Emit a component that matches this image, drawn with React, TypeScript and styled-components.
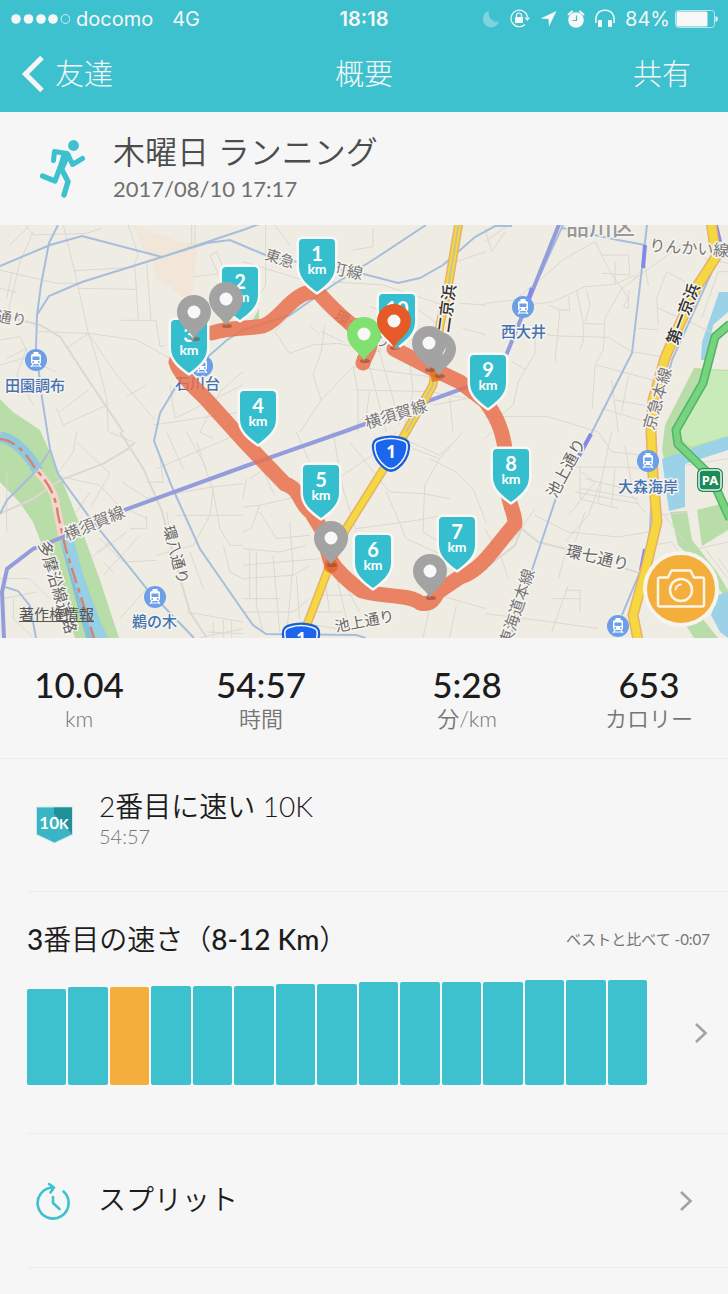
import React from "react";
import styled, { createGlobalStyle } from "styled-components";

const TEAL = "#3dc1cf";
const ORANGE = "#f4ae3b";
const LINE = "#ececec";

const GlobalStyle = createGlobalStyle`
  * { box-sizing: border-box; }
  body {
    margin: 0;
    background: #f6f6f6;
    font-family: Lato, "Noto Sans CJK JP", sans-serif;
    color: #1c1c1c;
  }
  button { font: inherit; color: inherit; background: none; border: 0; padding: 0; cursor: pointer; }
  h1, h2, p, dl, dd, dt { margin: 0; font-weight: inherit; }
`;

const Page = styled.main`
  min-height: 100vh;
  overflow: hidden;
`;

const TopBar = styled.header`
  display: flex;
  flex-direction: column;
  height: 112px;
  background: ${TEAL};
  color: #f6f6f6;
`;

const StatusBar = styled.div`
  display: grid;
  grid-template-columns: 1fr auto 1fr;
  align-items: center;
  height: 37px;
  padding: 0 10px;
  font-family: Inter, sans-serif;
  font-size: 20px;
`;

const Carrier = styled.div`
  display: flex;
  align-items: center;
  gap: 19px;
`;

const Signal = styled.div`
  display: flex;
  align-items: center;
  gap: 6px;
`;

const Clock = styled.div`
  font-weight: 600;
`;

const StatusIcons = styled.div`
  display: flex;
  align-items: center;
  justify-content: flex-end;
  gap: 10px;
`;

const Battery = styled.div`
  display: flex;
  align-items: center;
  gap: 5px;
`;

const Nav = styled.nav`
  display: grid;
  grid-template-columns: 1fr auto 1fr;
  align-items: center;
  height: 73px;
  font-size: 29px;
  font-weight: 300;
  line-height: 40px;
`;

const BackButton = styled.button`
  justify-self: start;
  display: flex;
  align-items: center;
  gap: 10px;
  margin-left: 21px;
`;

const ShareButton = styled.button`
  justify-self: end;
  margin-right: 37px;
`;

const NavTitle = styled.h1`
  font-size: 29px;
`;

const Activity = styled.section`
  display: flex;
  align-items: center;
  gap: 27px;
  height: 113px;
  padding: 0 39px;
`;

const ActivityTitle = styled.h2`
  font-size: 32px;
  line-height: 40px;
  font-weight: 350;
  color: #4c4c4c;
`;

const ActivityDate = styled.p`
  font-size: 22px;
  line-height: 34px;
  color: #707070;
`;

const MapFrame = styled.section`
  position: relative;
`;

const MapSvg = styled.svg`
  display: block;
  width: 100%;
  height: auto;
  font-family: "Noto Sans CJK JP", sans-serif;
`;

const Copyright = styled.a`
  position: absolute;
  left: 19px;
  bottom: 13px;
  font-size: 15px;
  line-height: 22px;
  color: #555;
`;

const CameraButton = styled.button`
  position: absolute;
  right: 9px;
  bottom: 11px;
  display: grid;
  place-items: center;
  width: 76px;
  height: 76px;
  border: 4px solid #f6f4ef;
  border-radius: 50%;
  background: ${ORANGE};
`;

const Stats = styled.dl`
  display: grid;
  grid-template-columns: 158fr 206fr 206fr 158fr;
  height: 121px;
  padding-top: 24px;
  border-bottom: 1px solid ${LINE};
  text-align: center;
`;

const Stat = styled.div`
  display: flex;
  flex-direction: column-reverse;
  justify-content: flex-end;
`;

const StatValue = styled.dd`
  font-size: 35px;
  line-height: 44px;
  font-weight: 500;
`;

const StatLabel = styled.dt`
  font-size: 22px;
  line-height: 26px;
  font-weight: 350;
  color: #757575;
`;

const Row = styled.section<{ $tall?: boolean }>`
  display: flex;
  align-items: center;
  gap: 25px;
  height: ${(p) => (p.$tall ? 134 : 133)}px;
  margin-left: 27px;
  padding-left: 8px;
  border-bottom: 1px solid ${LINE};
`;

const RecordText = styled.div`
  padding-bottom: 12px;
`;

const RecordTitle = styled.h2`
  font-size: 28px;
  line-height: 34px;
  font-weight: 350;
`;

const RecordTime = styled.p`
  font-size: 20px;
  line-height: 26px;
  font-weight: 350;
  color: #757575;
`;

const Ranking = styled.section`
  height: 242px;
  margin-left: 27px;
  border-bottom: 1px solid ${LINE};
`;

const RankingHead = styled.div`
  display: flex;
  align-items: center;
  justify-content: space-between;
  padding: 27px 18px 0 0;
`;

const RankingTitle = styled.h2`
  font-size: 28px;
  line-height: 40px;
  font-weight: 500;
`;

const Kanji = styled.span`
  font-weight: 350;
`;

const Compare = styled.p`
  font-size: 15px;
  line-height: 20px;
  color: #757575;
`;

const ChartRow = styled.div`
  display: flex;
  align-items: center;
  justify-content: space-between;
  padding: 21px 20px 0 0;
`;

const Bars = styled.div`
  display: flex;
  align-items: flex-end;
  gap: 2px;
  flex: 1;
  height: 105px;
  margin-right: 47px;
`;

const Bar = styled.div<{ $current: boolean }>`
  flex: 1;
  border-radius: 2px;
  background: ${(p) => (p.$current ? ORANGE : TEAL)};
`;

const IconButton = styled.button`
  display: flex;
`;

const SplitButton = styled.button`
  display: flex;
  align-items: center;
  gap: 27px;
  width: 100%;
  height: 100%;
  padding-right: 35px;
  font-size: 28px;
  font-weight: 350;
  line-height: 40px;
  text-align: left;
`;

const SplitLabel = styled.span`
  flex: 1;
  padding-bottom: 4px;
`;

/* Minor streets, drawn per tile at three times the map scale. */
const streetTiles = [
  {
    x: 0, y: 225,
    thin: "M75 0L100 30L260 25L305 10M100 20L60 110L20 280M0 135L170 175L245 175M190 0L230 165L265 325L290 400L320 520L325 621M222 137L405 127L415 283M232 190L408 193M363 286H468L480 365L500 360M385 0L415 90L400 125M440 115L453 283M115 320L265 325L410 345L510 400M265 325L200 370M265 325L350 450L465 585M580 155L655 147L630 90L650 80L670 130M0 190L50 202M35 145L20 220M0 345L60 335L110 440M0 420L70 400L170 440M20 400L80 370L50 450L100 540M180 560L265 495M170 550L190 600L320 540M510 480L525 580L729 480M380 515L440 480M600 621L660 500L729 440M575 0V60M585 0V60M30 60L90 0M460 600L729 560",
    wide: "M0 270L120 300L180 335L265 465L370 621",
  },
  {
    x: 243, y: 225,
    thin: "M68 0V180L30 240M95 0L140 60M0 110L180 165L420 180L600 240M330 75L390 65V10M140 385L95 320L160 250M140 385L210 360L285 355L410 380L420 350M210 450L235 380L245 300M210 450L235 525L170 621M235 525L330 425L345 500V621M330 425L560 455M340 495L560 500L670 520M640 110L729 80M650 235L729 240M380 245L430 260L520 250L590 300M660 310L729 330M235 320L300 350M280 240L360 350L430 621M500 400L510 500L480 621M400 350L450 520L470 600M200 300L230 330M570 540L729 510M620 520L630 621M380 500L370 570L320 621",
    wide: "",
  },
  {
    x: 485, y: 225,
    thin: "M0 50L70 0M0 10L20 80L60 20M0 235L90 225L170 160L240 100L330 50M130 240L205 230L300 185L390 178L450 150M190 240L225 255L210 410M275 195L295 295V350L285 375M250 215L255 255L225 255M295 295L355 298M305 195L315 240L300 290M330 50L375 140L410 190L590 60M350 90H430L435 150L350 145M390 110V180M410 190L430 220L415 245L430 250L432 195M410 190L360 280L355 375L330 420L322 550M150 325L220 333L370 337L440 380L560 400M150 340V385L100 470L85 540L50 570M80 410L120 433M0 575H190L340 621M335 420L540 475M380 465L400 621M430 455L410 560M390 525L500 545M520 250L700 330M545 140L515 220L520 300M545 140L600 170M660 100L729 115M650 280L700 140H729M460 310L520 315M350 550L480 590M440 170L480 120L490 180",
    wide: "",
  },
  {
    x: 0, y: 432,
    thin: "M230 30L330 125L275 220M165 130L300 160L365 230M500 0L550 110M470 110L729 0M440 200L635 165L729 155M640 170L630 250L580 340L470 370M365 150L460 210M380 230L440 260M390 290H440V250M530 250H729M590 30L640 180L660 290L690 340H729M310 430L420 310M270 380L380 300M500 240L510 300M560 540L729 570M600 617L729 590M570 360L610 470M300 320L370 390L470 385M20 120V300M0 440L90 440L150 500M670 340L690 420L729 440M360 560L440 470M310 390L340 420M290 360L330 330M560 0L620 110M600 0L640 20M230 240L270 180M440 150H490L480 80M100 617L40 560V500M10 500L110 480M640 570V617M670 565V617M695 565V617M620 600L729 605M230 0L220 60L170 130M330 0L400 30",
    wide: "M0 245L100 200L180 145L310 95L385 50L405 30M360 0L430 110L485 235L520 370L570 540L620 617",
  },
  {
    x: 243, y: 432,
    thin: "M0 225L50 220L180 190L300 130L430 40L460 0M20 140L60 115L95 190M50 220L25 290L0 300M160 0L200 90M270 0L300 170L340 300M320 30L440 180L540 185L620 200M430 180L490 320L600 370M560 80L640 120L690 170L729 270M340 290L520 265L600 250M510 50L590 80L545 160L540 300L590 330M590 80L660 0M0 350L110 360L190 340M20 355V500M40 360V520L60 600M0 400L230 380M0 440L150 430L200 400M0 540H150L200 500M90 370L110 600M140 270L150 400L130 617M240 400L260 540M280 430L310 560M200 540H300M590 490L729 530M640 520L620 617M560 530L540 617M10 140L0 200M50 240L100 320L200 310M480 20L590 70L620 40M0 500H110M160 430L170 560M290 430L350 540M240 490H350M220 580L280 590",
    wide: "",
  },
  {
    x: 485, y: 432,
    thin: "M380 0L350 140L310 250L240 330M270 105H400L480 110M285 105V200L400 230M150 250L250 300L400 315L490 300M330 150L250 250M0 290L50 380L70 440M240 475H285V540M250 460L200 600M0 545L200 570L340 590M200 500H285M440 190L480 240M530 240L600 330M500 340L560 330L590 370M700 380L729 420M600 100L729 80M420 40L440 160M300 140L460 180M290 170L460 200M270 180L460 215M350 140L340 210M390 110L380 220M290 120L330 150M640 350L729 330M660 350L729 440M0 20L20 0M340 0L380 60L480 70M300 240L270 330M150 230L80 330M250 330L220 440M530 250L610 240",
    wide: "M110 290L160 330L240 350M0 410L90 340L110 290M420 410L470 425",
  },
];

const railLines =
  "M0 266L50 245L82 236L162 257L243 230L265 222M58 225L49 243L41 285L37 315L36 348L42 398L50 449L58 474L87 514L147 589L194 638M37 315L49 296L82 282L162 257L207 243L230 240L270 257L360 273L398 283L420 278L443 265L475 237L495 226H512M426 225L376 258L333 285L290 315L243 330L227 340L202 362L177 385L160 413L154 441L172 487L200 549L243 611L253 625L266 634L356 635L366 638M50 450L37 470L7 500L0 514M5 587L18 591L30 606L36 638M563 225L540 275M562 228L618 240L645 245M647 225L642 268L632 353L592 432L557 495L533 567L510 638M718 258L672 360L655 425L650 530L645 560L622 615";

const purpleLine =
  "M4 639L2 592L7 569L33 549L63 537L127 509L243 467L343 432L470 386L490 378L507 353L532 292L560 222";

const daiNiKeihin =
  "M459 222L448 288L440 325L433 385L406 432L383 470L346 529L331 562L308 622L300 640";

const daiIchiKeihin =
  "M711 222L715 248L716 257L698 285L678 328L665 358L653 400L651 432L653 475L657 522L645 572L633 615L638 640";

const expressway = "M730 324L715 337L703 383L676 430L678 444L710 475L730 519";

const route =
  "M363 363C366 352 375 346 366 337C352 324 340 318 317 291C308 292 303 294 300 296C285 305 277 321 263 326C248 329 230 327 212 333M176 362C180 375 195 388 205 398L243 440L285 484C300 488 300 505 311 512L322 530L330 560C340 575 350 583 362 591C380 597 410 594 420 603C432 606 435 597 438 592L460 577C483 570 495 546 515 524C515 510 507 505 507 480C507 440 500 420 485 401L460 382L433 369L394 349";

const kmBadges: [string, number, number][] = [
  ["2", 240, 267],
  ["1", 317, 239],
  ["3", 189, 320],
  ["4", 258, 391],
  ["5", 321, 465],
  ["6", 373, 535],
  ["7", 457, 517],
  ["8", 511, 449],
  ["9", 488, 355],
  ["10", 397, 294],
];

const GREY = "#a3a3a3";

const pins: [number, number, string][] = [
  [194, 312, GREY],
  [226, 299, GREY],
  [331, 538, GREY],
  [430, 571, GREY],
  [439, 349, GREY],
  [429, 343, GREY],
  [364, 334, "#80e070"],
  [394, 321, "#e65a28"],
];

type LabelSpec = { t: string; x: number; y: number; r?: number; s?: number; c?: string; w?: number };

const STATION_BLUE = "#4672b2";

const labels: LabelSpec[] = [
  { t: "品川区", x: 566, y: 235, s: 23, c: "#999", w: 500 },
  { t: "りんかい線", x: 649, y: 251, r: 4, s: 16 },
  { t: "東急", x: 264, y: 259, r: 18, s: 15 },
  { t: "町線", x: 330, y: 273, r: 12, s: 16 },
  { t: "環七", x: 333, y: 319, r: 28, s: 15 },
  { t: "り", x: 374, y: 344, r: 15, s: 15 },
  { t: "通り", x: -4, y: 321, r: 10, s: 15 },
  { t: "二京浜", x: 449, y: 333, r: -82, s: 16, c: "#333", w: 500 },
  { t: "第一京浜", x: 677, y: 346, r: -69, s: 16, c: "#333", w: 500 },
  { t: "京急本線", x: 654, y: 431, r: -74, s: 16 },
  { t: "池上通り", x: 556, y: 499, r: -62, s: 16, c: "#666" },
  { t: "東海道本線", x: 510, y: 647, r: -72, s: 16 },
  { t: "環七通り", x: 565, y: 556, r: 13, s: 16, c: "#666" },
  { t: "横須賀線", x: 367, y: 429, r: -17, s: 16 },
  { t: "横須賀線", x: 67, y: 541, r: -23, s: 16 },
  { t: "環八通り", x: 163, y: 527, r: 75, s: 15, c: "#666" },
  { t: "多摩沿線道路", x: 38, y: 543, r: 73, s: 16, c: "#666" },
  { t: "池上通り", x: 336, y: 632, r: -11, s: 15, c: "#666" },
  { t: "田園調布", x: 5, y: 391, c: STATION_BLUE, w: 500 },
  { t: "石川台", x: 175, y: 389, c: STATION_BLUE, w: 500 },
  { t: "西大井", x: 501, y: 337, c: STATION_BLUE, w: 500 },
  { t: "鵜の木", x: 132, y: 627, c: STATION_BLUE, w: 500 },
  { t: "大森海岸", x: 618, y: 492, c: STATION_BLUE, w: 500 },
];

const stations: [number, number][] = [
  [36, 360],
  [202, 366],
  [523, 307],
  [155, 597],
  [648, 461],
  [618, 626],
];

const MapLabel = ({ t, x, y, r = 0, s = 15, c = "#777", w = 400 }: LabelSpec) => (
  <text
    transform={`translate(${x} ${y}) rotate(${r})`}
    fontSize={s}
    fontWeight={w}
    fill={c}
    stroke="#f6f4ef"
    strokeWidth="3"
    strokeLinejoin="round"
    paintOrder="stroke"
  >
    {t}
  </text>
);

const KmBadge = ({ n, x, y }: { n: string; x: number; y: number }) => (
  <g transform={`translate(${x} ${y})`}>
    <path
      d="M-14 0H14Q18 0 18 4V28C18 40 8 47 0 53C-8 47 -18 40 -18 28V4Q-18 0 -14 0Z"
      fill="#35bfce"
      stroke="#f8f8f6"
      strokeWidth="5"
      strokeLinejoin="round"
      paintOrder="stroke"
    />
    <g fill="#fff" fontFamily="Lato, sans-serif" fontWeight="700" textAnchor="middle">
      <text y="22" fontSize="20">{n}</text>
      <text y="35" fontSize="14">km</text>
    </g>
  </g>
);

const Pin = ({ x, y, fill }: { x: number; y: number; fill: string }) => (
  <g transform={`translate(${x} ${y})`}>
    <ellipse cx="1" cy="27" rx="5" ry="2" fill="#8d4a38" opacity="0.6" />
    <path d="M0 27C-3 19 -17 13 -17 0A17 17 0 0 1 17 0C17 13 3 19 0 27Z" fill={fill} />
    <circle r="6.5" fill="#f8f8f8" />
  </g>
);

const Station = ({ x, y }: { x: number; y: number }) => (
  <g transform={`translate(${x} ${y})`}>
    <circle r="11" fill="#6c9fe8" />
    <rect x="-5" y="-6" width="10" height="10" rx="2" fill="#fff" />
    <rect x="-3.5" y="-3.5" width="7" height="3.5" fill="#6c9fe8" />
    <path d="M-2.5 -6V-8H2.500V-6" fill="#fff" />
    <circle cx="-2.8" cy="2" r="0.9" fill="#6c9fe8" />
    <circle cx="2.8" cy="2" r="0.9" fill="#6c9fe8" />
    <path d="M-3 4L-5 7M3 4L5 7M-4 6H4" stroke="#fff" strokeWidth="1.2" />
  </g>
);

const HighwayShield = ({ x, y }: { x: number; y: number }) => (
  <g transform={`translate(${x} ${y})`}>
    <path
      d="M-11 -16Q0 -19 11 -16C16 -15 19 -12 18 -5C17 3 13 9 7 14Q0 20 -7 14C-13 9 -17 3 -18 -5C-19 -12 -16 -15 -11 -16Z"
      fill="#1c66ee"
      stroke="#1b5fd6"
      strokeWidth="2"
    />
    <path
      d="M-10 -14Q0 -17 10 -14C15 -13 17 -11 16 -5C15 2 11 8 6 12Q0 17 -6 12C-11 8 -15 2 -16 -5C-17 -11 -15 -13 -10 -14Z"
      fill="none"
      stroke="#f4f7ff"
      strokeWidth="1.6"
    />
    <text y="4" textAnchor="middle" fill="#fff" fontSize="17" fontWeight="700" fontFamily="'Noto Sans', sans-serif">1</text>
  </g>
);

const RouteMap = () => (
  <MapSvg viewBox="0 225 728 413" role="img" aria-label="ランニングコースの地図">
    <rect x="0" y="225" width="728" height="413" fill="#efece4" />
    <path d="M133 225L160 235L183 243L198 242L193 285L191 300L180 296L172 287L157 279L152 258L143 249Z" fill="#f1e6d8" />
    <path d="M0 399L13 412L40 430L60 475L80 525L100 580L119 638H75L63 598L33 522L20 503L0 482Z" fill="#b9dda8" />
    <path d="M694 368L728 370V437L664 459L662 450L665 425Z" fill="#b9dda8" />
    <path d="M706 370L728 371V436L690 447L679 436V430L703 385Z" fill="#c9ebba" />
    <path d="M728 292H719L702 342L701 360L707 360L713 325L728 312Z" fill="#9cd2e8" />
    <path d="M728 436L662 459L669 511L685 507V464L728 450Z" fill="#9cd2e8" />
    <path d="M670 512L687 511L692 540L717 572L728 590V600L696 562L678 545Z" fill="#b9dda8" />
    <path d="M697 510L728 502V530L702 546Z" fill="#b9dda8" />
    <path d="M684 622L702 618L718 638H694Z" fill="#b9dda8" />
    <path d="M728 592L718 595L711 615L720 632L728 638Z" fill="#9cd2e8" />
    <path d="M252 321L259 309V320Z" fill="#b9dda8" />

    {streetTiles.map((tile) => (
      <g
        key={`${tile.x}-${tile.y}`}
        transform={`translate(${tile.x} ${tile.y}) scale(0.3333)`}
        fill="none"
        stroke="#dad8d1"
      >
        <path d={tile.thin} strokeWidth="3" />
        <path d={tile.wide} strokeWidth="6" />
      </g>
    ))}

    <path d="M0 437Q20 440 38 471" fill="none" stroke="#8ec9dd" strokeWidth="11" />
    <path d="M36 470Q55 490 56 505L63 540" fill="none" stroke="#f3d6cc" strokeWidth="8" />
    <path d="M60 540H74Q84 585 108 638H86Z" fill="#97cfe4" />
    <path d="M60 540L86 638H93Z" fill="#86bfd6" />
    <path
      d="M0 439Q20 441 36 470Q55 488 58 515L66 550L94 638"
      fill="none"
      stroke="#d98070"
      strokeWidth="2.4"
      strokeDasharray="16 5 5 5"
    />

    <path d={railLines} fill="none" stroke="#a6bedb" strokeWidth="2" />
    <path d={purpleLine} fill="none" stroke="#949cdb" strokeWidth="4" />
    <path d="M645 245L643 268M591 434L579 456M645 549L641 570M716 225L720 242M532 288L528 300" stroke="#8388ea" strokeWidth="4" />

    <g fill="none" strokeLinejoin="round">
      <g stroke="#e8b06a">
        <path d={daiNiKeihin} strokeWidth="9" />
        <path d={daiIchiKeihin} strokeWidth="11" />
      </g>
      <g stroke="#f5d83f">
        <path d={daiNiKeihin} strokeWidth="6" />
        <path d={daiIchiKeihin} strokeWidth="8" />
      </g>
      <path d="M459 222L448 288L440 325L433 385L406 432" stroke="#c9c39a" strokeWidth="2" />
      <path d={expressway} stroke="#4eb563" strokeWidth="9" />
      <path d={expressway} stroke="#77d380" strokeWidth="6" />
    </g>

    {stations.map(([x, y]) => (
      <Station key={`${x}-${y}`} x={x} y={y} />
    ))}
    {labels.map((l) => (
      <MapLabel key={`${l.t}-${l.x}`} {...l} />
    ))}

    <HighwayShield x={391} y={454} />
    <HighwayShield x={301} y={641} />

    <g>
      <rect x="697" y="468" width="26" height="24" rx="6" fill="#1e8a56" />
      <rect x="699" y="470" width="22" height="20" rx="4" fill="none" stroke="#e6f4ec" strokeWidth="1.5" />
      <text x="710" y="485" textAnchor="middle" fontSize="13" fontWeight="700" fill="#fff" fontFamily="'Noto Sans', sans-serif">PA</text>
    </g>

    <path d={route} fill="none" stroke="#e86f4a" strokeOpacity="0.84" strokeWidth="15" strokeLinecap="round" strokeLinejoin="round" />
    <circle cx="331" cy="566" r="7" fill="#e65c22" opacity="0.7" />
    <path d="M428 364L443 380L432 382Z" fill="#e2701e" opacity="0.8" />

    {kmBadges.map(([n, x, y]) => (
      <KmBadge key={n} n={n} x={x} y={y} />
    ))}
    {pins.map(([x, y, fill]) => (
      <Pin key={`${x}-${y}`} x={x} y={y} fill={fill} />
    ))}
  </MapSvg>
);

const Chevron = () => (
  <svg width="14" height="22" viewBox="0 0 14 22" fill="none" stroke="#a3a3a3" strokeWidth="2.6" aria-hidden="true">
    <path d="M2 2L11.5 11L2 20" />
  </svg>
);

const stats = [
  ["10.04", "km"],
  ["54:57", "時間"],
  ["5:28", "分/km"],
  ["653", "カロリー"],
];

const barHeights = [96, 98, 98, 99, 99, 99, 101, 101, 103, 103, 103, 103, 105, 105, 105];

export default function App() {
  return (
    <Page>
      <GlobalStyle />
      <TopBar>
        <StatusBar>
          <Carrier>
            <Signal>
              <svg width="60" height="12" viewBox="0 0 60 12" fill="#f6f6f6" aria-hidden="true">
                {[6, 18.5, 31, 43].map((cx) => (
                  <circle key={cx} cx={cx} cy="6" r="4.8" />
                ))}
                <circle cx="55.500" cy="6" r="4.4" fill="none" stroke="#d5f0f3" />
              </svg>
              <span>docomo</span>
            </Signal>
            <span>4G</span>
          </Carrier>
          <Clock>18:18</Clock>
          <StatusIcons aria-hidden="true">
            <svg width="17" height="18" viewBox="0 0 17 18">
              <path d="M6 1A8.3 8.3 0 1 0 16 11.5A8.400 8.400 0 0 1 6 1Z" fill="#7dd4de" />
            </svg>
            <svg width="20" height="19" viewBox="0 0 20 19" fill="none" stroke="#f6f6f6" strokeWidth="1.2">
              <path d="M17.5 8A8.3 8.3 0 1 0 15 15.5" />
              <path d="M14.5 8.500H20L17.3 12Z" fill="#f6f6f6" stroke="none" />
              <rect x="5" y="8" width="8" height="6" rx="0.5" fill="#f6f6f6" stroke="none" />
              <path d="M6.5 9V6.500A2.500 2.500 0 0 1 11.500 6.500V9" />
            </svg>
            <svg width="17" height="17" viewBox="0 0 17 17">
              <path d="M16.500 1L9 16.500L8.500 9L0.500 8.500Z" fill="#f6f6f6" />
            </svg>
            <svg width="18" height="18" viewBox="0 0 18 18">
              <circle cx="9" cy="10" r="7.8" fill="#f6f6f6" />
              <path d="M1.500 4.500L5 1.500M16.500 4.500L13 1.500" stroke="#f6f6f6" strokeWidth="2" strokeLinecap="round" />
              <path d="M9.500 5.500V10.500H5.500" stroke={TEAL} strokeWidth="1.2" fill="none" />
            </svg>
            <svg width="20" height="19" viewBox="0 0 20 19">
              <path d="M1.200 14C-0.500 6 3.500 1.200 10 1.200S20.500 6 18.800 14" fill="none" stroke="#f6f6f6" strokeWidth="1.5" />
              <rect x="3" y="11" width="4" height="7" rx="1" fill="#f6f6f6" />
              <rect x="13" y="11" width="4" height="7" rx="1" fill="#f6f6f6" />
            </svg>
            <Battery>
              <span>84%</span>
              <svg width="43" height="18" viewBox="0 0 43 18">
                <rect x="0.5" y="0.5" width="39" height="17" rx="3" fill="none" stroke="#b9e7ec" />
                <rect x="1.5" y="1.5" width="31" height="15" rx="1.5" fill="#f8f8f8" />
                <path d="M40.500 6Q43 7 43 9T40.500 12Z" fill="#f6f6f6" />
              </svg>
            </Battery>
          </StatusIcons>
        </StatusBar>
        <Nav>
          <BackButton type="button">
            <svg width="24" height="38" viewBox="0 0 24 38" fill="none" stroke="#f6f6f6" strokeWidth="5" aria-hidden="true">
              <path d="M21 2.500L4.500 19L21 35.500" />
            </svg>
            友達
          </BackButton>
          <NavTitle>概要</NavTitle>
          <ShareButton type="button">共有</ShareButton>
        </Nav>
      </TopBar>

      <Activity>
        <svg width="47" height="58" viewBox="0 0 47 58" fill="none" stroke={TEAL} strokeLinecap="round" strokeLinejoin="round" aria-hidden="true">
          <circle cx="34.5" cy="5.5" r="5.4" fill={TEAL} stroke="none" />
          <path d="M14.500 20.500L15.500 11.500L28 13.500" strokeWidth="5" />
          <path d="M25 14L29.500 15L23 29L20.500 28.500Z" fill={TEAL} strokeWidth="4.500" />
          <path d="M29 14.500L33.500 24.500L43.500 18.500" strokeWidth="5" />
          <path d="M22.500 29L29 41.500L25 55" strokeWidth="5.400" />
          <path d="M20.500 29L16 41L3.500 36" strokeWidth="5.200" />
        </svg>
        <div>
          <ActivityTitle>木曜日 ランニング</ActivityTitle>
          <ActivityDate>2017/08/10 17:17</ActivityDate>
        </div>
      </Activity>

      <MapFrame>
        <RouteMap />
        <Copyright href="#copyright">著作権情報</Copyright>
        <CameraButton type="button" aria-label="写真を追加">
          <svg width="50" height="42" viewBox="0 0 50 42" fill="none" stroke="#fbf5e8" strokeWidth="2.5" strokeLinejoin="round" aria-hidden="true">
            <path d="M4 9.500H12L15.500 2.500H34.500L38 9.500H46Q48 9.500 48 11.500V36.500Q48 38.500 46 38.500H4Q2 38.500 2 36.500V11.500Q2 9.500 4 9.500Z" />
            <circle cx="25" cy="22" r="11" />
            <path d="M19.500 21.500A6 6 0 0 1 25 16.500" strokeWidth="1.8" strokeLinecap="round" />
          </svg>
        </CameraButton>
      </MapFrame>

      <Stats>
        {stats.map(([value, label]) => (
          <Stat key={label}>
            <StatLabel>{label}</StatLabel>
            <StatValue>{value}</StatValue>
          </Stat>
        ))}
      </Stats>

      <Row>
        <svg width="39" height="38" viewBox="0 0 39 38" aria-hidden="true">
          <path d="M1.500 1H37.500V28.500L19.500 37L1.500 28.500Z" fill="#3ab5c6" stroke="#c9e8ec" />
          <path d="M19 1.500H37V28L19 8Z" fill="#218f97" />
          <text x="19" y="23" textAnchor="middle" fill="#fff" fontFamily="Lato, sans-serif" fontWeight="700" fontSize="17">
            10<tspan fontSize="14">K</tspan>
          </text>
        </svg>
        <RecordText>
          <RecordTitle>2番目に速い 10K</RecordTitle>
          <RecordTime>54:57</RecordTime>
        </RecordText>
      </Row>

      <Ranking>
        <RankingHead>
          <RankingTitle>
            3<Kanji>番目の速さ（</Kanji>8-12 Km<Kanji>）</Kanji>
          </RankingTitle>
          <Compare>ベストと比べて -0:07</Compare>
        </RankingHead>
        <ChartRow>
          <Bars>
            {barHeights.map((h, i) => (
              <Bar key={i} $current={i === 2} style={{ height: h }} />
            ))}
          </Bars>
          <IconButton type="button" aria-label="ランキングの詳細">
            <Chevron />
          </IconButton>
        </ChartRow>
      </Ranking>

      <Row $tall>
        <SplitButton type="button">
          <svg width="36" height="38" viewBox="0 0 36 38" fill="none" stroke={TEAL} strokeWidth="2.6" strokeLinecap="round" strokeLinejoin="round" aria-hidden="true">
            <path d="M28.500 9.500A15.500 15.500 0 1 1 18 5.500" />
            <path d="M14 2L19 5.500L15.500 10.500" />
            <path d="M18 15V21L24.500 27" />
          </svg>
          <SplitLabel>スプリット</SplitLabel>
          <Chevron />
        </SplitButton>
      </Row>
    </Page>
  );
}
